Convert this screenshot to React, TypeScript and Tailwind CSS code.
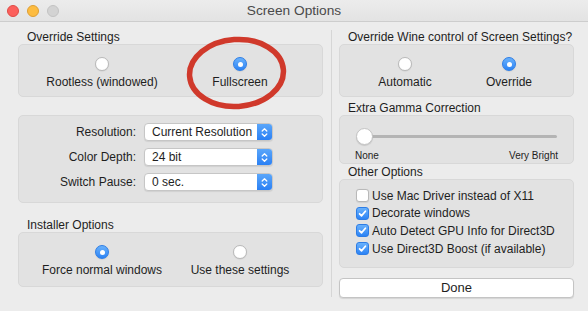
import React from "react";

function Radio({ on }: { on?: boolean }) {
  return on ? (
    <span className="flex h-[14px] w-[14px] items-center justify-center rounded-full border border-[#2d7de6] bg-linear-to-b from-[#69b1fb] to-[#2b83f5] shadow-[0_0.5px_1px_rgba(0,0,0,0.15)]">
      <span className="h-[5px] w-[5px] rounded-full bg-white" />
    </span>
  ) : (
    <span className="block h-[14px] w-[14px] rounded-full border border-[#b9b9b9] bg-white shadow-[0_0.5px_1px_rgba(0,0,0,0.1)]" />
  );
}

function RadioCell({ on, label, w }: { on?: boolean; label: string; w: string }) {
  return (
    <div className={`flex flex-col items-center ${w}`}>
      <Radio on={on} />
      <span className="mt-[4px] whitespace-nowrap text-[12px] leading-[14px] text-[#1e1e1e]">{label}</span>
    </div>
  );
}

function Check({ on }: { on?: boolean }) {
  return on ? (
    <span className="flex h-[13px] w-[13px] items-center justify-center rounded-[3px] border border-[#2d7de6] bg-linear-to-b from-[#69b1fb] to-[#2b83f5]">
      <svg width="11" height="11" viewBox="0 0 11 11">
        <path d="M2.6 5.8 L4.6 7.8 L8.4 3.2" fill="none" stroke="white" strokeWidth="1.8" strokeLinecap="round" strokeLinejoin="round" />
      </svg>
    </span>
  ) : (
    <span className="block h-[13px] w-[13px] rounded-[3px] border border-[#b9b9b9] bg-white shadow-[0_0.5px_1px_rgba(0,0,0,0.08)]" />
  );
}

function Popup({ value }: { value: string }) {
  return (
    <div className="flex h-[18px] w-[129px] items-stretch rounded-[4px] border border-[#c6c6c6] bg-white shadow-[0_1px_1px_rgba(0,0,0,0.08)]">
      <span className="flex-1 pl-[7px] text-[12px] leading-[16px] text-[#1e1e1e] whitespace-nowrap">{value}</span>
      <span className="flex w-[15px] items-center justify-center rounded-r-[3px] bg-linear-to-b from-[#5aa6fa] to-[#2a80f4]">
        <svg width="7" height="11" viewBox="0 0 7 11">
          <path d="M1.2 4 L3.5 1.8 L5.8 4" fill="none" stroke="white" strokeWidth="1.3" strokeLinecap="round" strokeLinejoin="round" />
          <path d="M1.2 7 L3.5 9.2 L5.8 7" fill="none" stroke="white" strokeWidth="1.3" strokeLinecap="round" strokeLinejoin="round" />
        </svg>
      </span>
    </div>
  );
}

const box = "rounded-[5px] border border-[#d8d8d8] bg-[#e2e2e2]";
const title = "text-[12px] leading-[14px] text-[#1e1e1e] pl-[9px] whitespace-nowrap";

export default function App() {
  return (
    <div
      className="relative h-[311px] w-[588px] overflow-hidden bg-[#ececec]"
      style={{ fontFamily: '"Liberation Sans", Arial, Helvetica, sans-serif' }}
    >
      {/* Title bar */}
      <div className="grid h-[22px] grid-cols-[1fr_auto_1fr] items-center border-b border-[#cdcdcd] bg-linear-to-b from-[#ececec] to-[#e3e3e3]">
        <div className="flex items-center gap-[8px] pl-[7px]">
          <span className="h-[12px] w-[12px] rounded-full border border-[#df4b46] bg-[#fc605c]" />
          <span className="h-[12px] w-[12px] rounded-full border border-[#de9f34] bg-[#fdbc40]" />
          <span className="h-[12px] w-[12px] rounded-full border border-[#c3c3c3] bg-[#d3d3d3]" />
        </div>
        <div className="text-[13.7px] leading-[16px] text-[#4a4a4a]">Screen Options</div>
        <div />
      </div>

      {/* Content */}
      <div className="flex pl-[18px]">
        {/* Left column */}
        <div className="flex w-[305px] flex-col pt-[8px]">
          <div className={title}>Override Settings</div>
          <div className={`${box} flex h-[53px] pl-[14px] pt-[12px]`}>
            <RadioCell label="Rootless (windowed)" w="w-[138px]" />
            <RadioCell on label="Fullscreen" w="w-[138px]" />
          </div>

          <div className={`${box} mt-[18px] flex h-[88px] flex-col gap-[7px] pt-[7px]`}>
            {[
              ["Resolution:", "Current Resolution"],
              ["Color Depth:", "24 bit"],
              ["Switch Pause:", "0 sec."],
            ].map(([l, v]) => (
              <div key={l} className="flex items-center">
                <span className="w-[117px] text-right text-[12px] leading-[14px] text-[#1e1e1e]">{l}</span>
                <div className="ml-[8px]">
                  <Popup value={v} />
                </div>
              </div>
            ))}
          </div>

          <div className={`${title} mt-[15px]`}>Installer Options</div>
          <div className={`${box} flex h-[55px] pl-[14px] pt-[12px]`}>
            <RadioCell on label="Force normal windows" w="w-[138px]" />
            <RadioCell label="Use these settings" w="w-[138px]" />
          </div>
        </div>

        {/* Divider */}
        <div className="ml-[8px] mt-[8px] h-[267px] w-px bg-[#d6d6d6]" />

        {/* Right column */}
        <div className="ml-[7px] flex w-[235px] flex-col pt-[8px]">
          <div className={title}>Override Wine control of Screen Settings?</div>
          <div className={`${box} flex h-[53px] pl-[13px] pt-[12px]`}>
            <RadioCell label="Automatic" w="w-[104px]" />
            <RadioCell on label="Override" w="w-[104px]" />
          </div>

          <div className={`${title} mt-[4px]`}>Extra Gamma Correction</div>
          <div className={`${box} flex h-[49px] flex-col pt-[12px]`}>
            <div className="relative ml-[16px] mr-[16px] h-[17px]">
              <div className="absolute left-[8px] right-0 top-[7px] h-[3px] rounded-full bg-[#b4b4b4]" />
              <div className="absolute left-0 top-0 h-[17px] w-[17px] rounded-full border border-[#c4c4c4] bg-white shadow-[0_1px_1px_rgba(0,0,0,0.12)]" />
            </div>
            <div className="mt-[5px] flex justify-between pl-[15px] pr-[15px] text-[10px] leading-[12px] text-[#1e1e1e]">
              <span>None</span>
              <span>Very Bright</span>
            </div>
          </div>

          <div className={`${title} mt-[1px]`}>Other Options</div>
          <div className={`${box} flex h-[89px] flex-col pl-[16px] pt-[7px]`}>
            {[
              [false, "Use Mac Driver instead of X11"],
              [true, "Decorate windows"],
              [true, "Auto Detect GPU Info for Direct3D"],
              [true, "Use Direct3D Boost (if available)"],
            ].map(([on, l]) => (
              <div key={l as string} className="flex h-[17.6px] items-center">
                <Check on={on as boolean} />
                <span className="ml-[3px] text-[12px] leading-[14px] text-[#1e1e1e] whitespace-nowrap">{l as string}</span>
              </div>
            ))}
          </div>

          <button className="mt-[10px] flex h-[20px] w-[235px] items-center justify-center rounded-[4px] border border-[#c4c4c4] bg-white text-[13px] leading-[16px] text-[#1e1e1e] shadow-[0_1px_1px_rgba(0,0,0,0.1)]">
            Done
          </button>
        </div>
      </div>

      {/* Red annotation ellipse */}
      <svg className="pointer-events-none absolute left-0 top-0" width="588" height="311">
        <ellipse cx="236.5" cy="73" rx="47" ry="33.5" fill="none" stroke="#d0392b" strokeWidth="5.5" transform="rotate(-4 236.5 73)" />
      </svg>
    </div>
  );
}
